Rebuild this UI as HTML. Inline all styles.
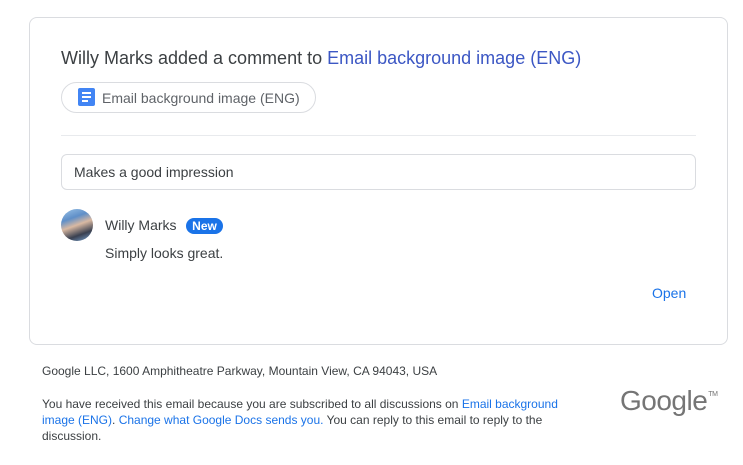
<!DOCTYPE html>
<html><head><meta charset="utf-8"><style>
body{margin:0;width:743px;height:465px;background:#fff;font-family:"Liberation Sans",Arial,sans-serif;position:relative;overflow:hidden}
.card{position:absolute;left:29px;top:17px;width:699px;height:328px;border:1px solid #dadce0;border-radius:8px;box-sizing:border-box}
.a{position:absolute;white-space:nowrap}
a{color:#1a73e8;text-decoration:none}
</style></head><body>
<div class="card"></div>
<div class="a" style="left:61px;top:48px;font-size:18px;color:#3c4043">Willy Marks added a comment to <span style="color:#3c57c4">Email background image (ENG)</span></div>
<div class="a" style="left:61px;top:82px;width:255px;height:31px;border:1px solid #dadce0;border-radius:16px;box-sizing:border-box"></div>
<div class="a" style="left:78px;top:88px;width:17px;height:18px;background:#4285f4;border-radius:2px">
<div style="position:absolute;left:4px;top:4px;width:9px;height:2px;background:#fff"></div>
<div style="position:absolute;left:4px;top:8px;width:9px;height:2px;background:#fff"></div>
<div style="position:absolute;left:4px;top:12px;width:6px;height:2px;background:#fff"></div></div>
<div class="a" style="left:102px;top:90px;font-size:14px;color:#5f6368">Email background image (ENG)</div>
<div class="a" style="left:61px;top:135px;width:635px;height:1px;background:#e8eaed"></div>
<div class="a" style="left:61px;top:154px;width:635px;height:36px;border:1px solid #dadce0;border-radius:6px;box-sizing:border-box"></div>
<div class="a" style="left:74px;top:164px;font-size:14px;color:#3c4043">Makes a good impression</div>
<div class="a" style="left:61px;top:209px;width:32px;height:32px;border-radius:50%;background:linear-gradient(160deg,#9cc4e8 0%,#5f8fc8 30%,#d9b9a2 50%,#3a4050 75%,#7aa8d8 100%)"></div>
<div class="a" style="left:105px;top:217px;font-size:14px;color:#3c4043">Willy Marks</div>
<div class="a" style="left:186px;top:218px;height:16px;width:37px;background:#1a73e8;border-radius:8px;color:#fff;font-size:12px;font-weight:bold;text-align:center;line-height:16px">New</div>
<div class="a" style="left:105px;top:245px;font-size:14px;color:#3c4043">Simply looks great.</div>
<div class="a" style="left:652px;top:285px;font-size:14px;color:#1a73e8">Open</div>
<div class="a" style="left:42px;top:364px;font-size:12px;color:#3c4043">Google LLC, 1600 Amphitheatre Parkway, Mountain View, CA 94043, USA</div>
<div class="a" style="left:42px;top:396px;width:530px;white-space:normal;font-size:12px;line-height:16px;color:#3c4043">You have received this email because you are subscribed to all discussions on <a>Email background image (ENG)</a>. <a>Change what Google Docs sends you.</a> You can reply to this email to reply to the discussion.</div>
<div class="a" style="left:620px;top:385px;font-size:28px;color:#757575;letter-spacing:-0.5px">Google<span style="font-size:7px;vertical-align:top;position:relative;top:6px;margin-left:1px">TM</span></div>
</body></html>
